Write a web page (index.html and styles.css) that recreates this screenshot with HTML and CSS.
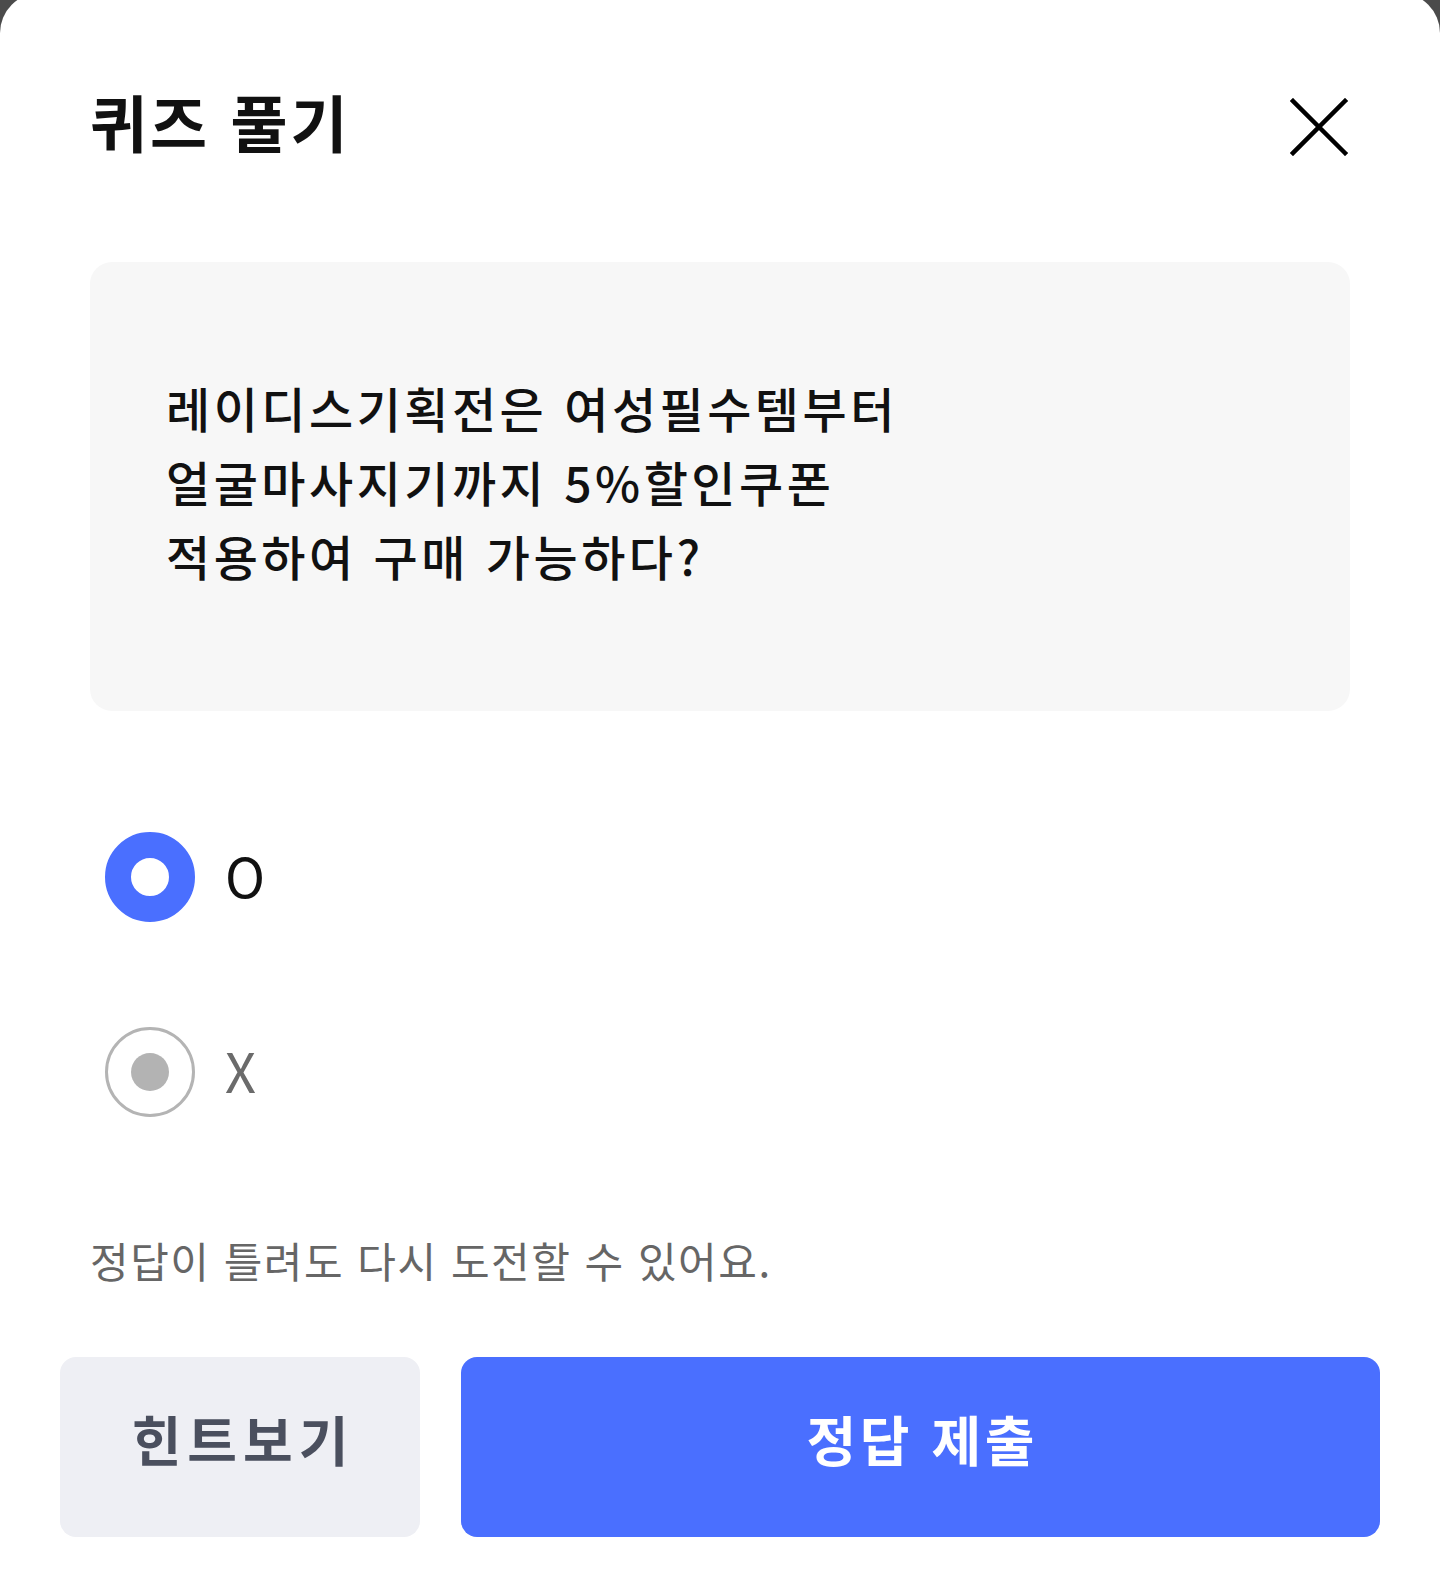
FILE: index.html
```html
<!DOCTYPE html>
<html lang="ko">
<head>
<meta charset="utf-8">
<title>퀴즈 풀기</title>
<link rel="stylesheet" href="styles.css">
</head>
<body>
<div class="sheet">
  <header class="header">
    <h1 class="title">퀴즈 풀기</h1>
    <button class="close" aria-label="닫기">
      <svg width="58" height="58" viewBox="0 0 58 58" fill="none" stroke="#000" stroke-width="4.5" stroke-linecap="square">
        <path d="M3 3 L55 55 M55 3 L3 55"/>
      </svg>
    </button>
  </header>

  <section class="question">
    <p class="question-text">레이디스기획전은 여성필수템부터<br>얼굴마사지기까지 5%할인쿠폰<br>적용하여 구매 가능하다?</p>
  </section>

  <div class="options">
    <label class="option">
      <span class="radio radio-on"></span>
      <span class="option-label label-on">O</span>
    </label>
    <label class="option">
      <span class="radio radio-off"><span class="dot"></span></span>
      <span class="option-label label-off">X</span>
    </label>
  </div>

  <p class="notice">정답이 틀려도 다시 도전할 수 있어요.</p>

  <div class="actions">
    <button class="btn btn-hint">힌트보기</button>
    <button class="btn btn-submit">정답 제출</button>
  </div>
</div>
</body>
</html>
```

FILE: styles.css
```css
* { box-sizing: border-box; }

html, body {
  margin: 0;
  padding: 0;
}

body {
  background: #4b4b4b;
  font-family: "Noto Sans CJK KR", "Noto Sans", sans-serif;
  color: #111;
  overflow: hidden;
}

.sheet {
  margin-top: -7px;
  min-height: calc(100vh + 7px);
  background: #fff;
  border-radius: 40px 40px 0 0;
  padding: 71px 60px 0;
}

.header {
  height: 120px;
  padding: 0 30px;
  display: flex;
  align-items: center;
  justify-content: space-between;
}

.title {
  margin: 0 0 7px;
  font-size: 62px;
  line-height: 70px;
  font-weight: 700;
  color: #111;
  letter-spacing: 3px;
}

.close {
  border: 0;
  padding: 0;
  background: none;
  width: 58px;
  height: 58px;
  margin-top: 5px;
  margin-right: 2px;
  display: flex;
}

.question {
  margin: 78px 30px 0;
  height: 449px;
  background: #f7f7f7;
  border-radius: 22px;
  padding: 0 76px;
  display: flex;
  align-items: center;
}

.question-text {
  margin: 0;
  font-size: 48px;
  line-height: 74px;
  font-weight: 500;
  color: #111;
  letter-spacing: 3.5px;
  padding-bottom: 12px;
}

.options {
  margin: 121px 30px 0;
  padding-left: 15px;
  display: flex;
  flex-direction: column;
  gap: 105px;
}

.option {
  display: flex;
  align-items: center;
  gap: 30px;
  height: 90px;
}

.radio {
  width: 90px;
  height: 90px;
  border-radius: 50%;
  flex: none;
  display: flex;
  align-items: center;
  justify-content: center;
}

.radio-on {
  background: #fff;
  border: 26px solid #4a6fff;
}

.radio-off {
  border: 3px solid #b4b4b4;
  background: #fff;
}

.dot {
  width: 38px;
  height: 38px;
  border-radius: 50%;
  background: #b3b3b3;
}

.option-label {
  font-size: 54px;
  line-height: 60px;
  margin-bottom: 4px;
}

.label-on { color: #111; }
.label-off { color: #6b6b6b; }

.notice {
  margin: 118px 30px 0;
  font-size: 42px;
  line-height: 50px;
  color: #666;
  font-weight: 400;
  letter-spacing: 1.5px;
}

.actions {
  margin-top: 72px;
  display: grid;
  grid-template-columns: 360px 1fr;
  gap: 41px;
}

.btn {
  height: 180px;
  border: 0;
  border-radius: 16px;
  font-family: "Noto Sans CJK KR", "Noto Sans", sans-serif;
  font-size: 54px;
  line-height: 60px;
  font-weight: 700;
  padding: 0 0 16px;
  display: flex;
  align-items: center;
  justify-content: center;
}

.btn-hint {
  background: #eeeff4;
  color: #4a4f5e;
  letter-spacing: 6px;
  padding-left: 6px;
}

.btn-submit {
  background: #4a6fff;
  color: #fff;
  letter-spacing: 3.5px;
  padding-left: 3.5px;
}
```
